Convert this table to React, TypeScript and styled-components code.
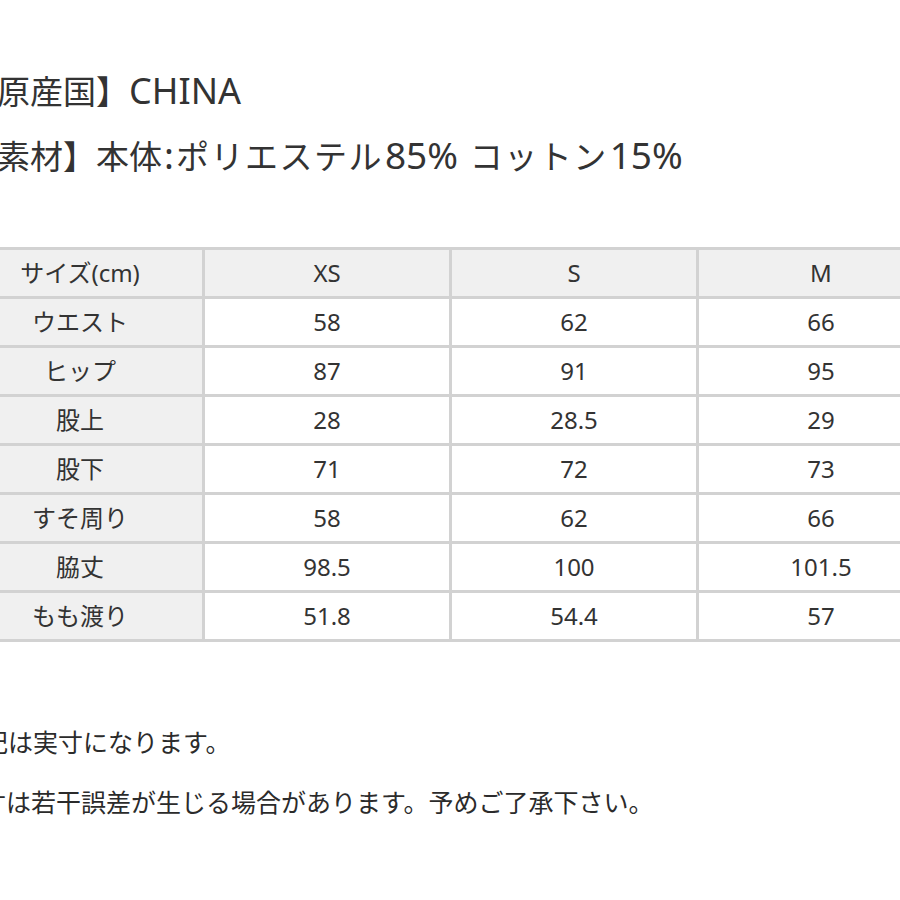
import React from "react";
import styled, { createGlobalStyle } from "styled-components";

const Global = createGlobalStyle`
  html, body {
    margin: 0;
    padding: 0;
    background: #ffffff;
    overflow: hidden;
  }
  body {
    font-family: "Noto Sans", "Noto Sans CJK JP", sans-serif;
    color: #333333;
  }
`;

const Page = styled.div`
  width: 900px;
  height: 900px;
  overflow: hidden;
  padding-top: 59px;
  box-sizing: border-box;
`;

const InfoLine = styled.div`
  font-size: 33px;
  line-height: 64px;
  height: 64px;
  margin-left: -36px;
  white-space: nowrap;
  color: #333333;
`;

const Latin = styled.span<{ $gap?: number; $size?: number }>`
  font-size: ${(p) => p.$size ?? 37}px;
  margin: 0 ${(p) => p.$gap ?? 0}px;
`;

const Kana = styled.span`
  letter-spacing: 1.5px;
`;

const Table = styled.table`
  margin-top: 60px;
  margin-left: -45px;
  width: 988px;
  table-layout: fixed;
  border-collapse: collapse;
  font-size: 24px;
  color: #333333;
`;

const Cell = styled.td<{ $shade?: boolean }>`
  width: 244px;
  height: 46px;
  padding: 0;
  text-align: center;
  vertical-align: middle;
  border: 3px solid #d2d2d2;
  background: ${(p) => (p.$shade ? "#f0f0f0" : "#ffffff")};
  line-height: 46px;
  white-space: nowrap;
`;

const Notes = styled.div`
  margin-top: 69px;
`;

const NoteLine = styled.div<{ $shift: number }>`
  font-family: "Noto Sans CJK JP", sans-serif;
  font-size: 25px;
  line-height: 60px;
  height: 60px;
  margin-left: ${(p) => p.$shift}px;
  white-space: nowrap;
  color: #2b2b2b;
`;

const header = ["サイズ(cm)", "XS", "S", "M"];
const rows: string[][] = [
  ["ウエスト", "58", "62", "66"],
  ["ヒップ", "87", "91", "95"],
  ["股上", "28", "28.5", "29"],
  ["股下", "71", "72", "73"],
  ["すそ周り", "58", "62", "66"],
  ["脇丈", "98.5", "100", "101.5"],
  ["もも渡り", "51.8", "54.4", "57"],
];

export default function App() {
  return (
    <>
      <Global />
      <Page>
        <InfoLine>
          【原産国】<Latin $size={36}>CHINA</Latin>
        </InfoLine>
        <InfoLine>
          【素材】本体<Latin $gap={2}>:</Latin>
          <Kana>ポリエステル</Kana>
          <Latin $gap={2}>85% </Latin>
          <Kana>コットン</Kana>
          <Latin $gap={2}>15%</Latin>
        </InfoLine>
        <Table>
          <tbody>
            <tr>
              {header.map((h) => (
                <Cell key={h} $shade>
                  {h}
                </Cell>
              ))}
            </tr>
            {rows.map((r) => (
              <tr key={r[0]}>
                {r.map((c, i) => (
                  <Cell key={i} $shade={i === 0}>
                    {c}
                  </Cell>
                ))}
              </tr>
            ))}
          </tbody>
        </Table>
        <Notes>
          <NoteLine $shift={-67}>※上記は実寸になります。</NoteLine>
          <NoteLine $shift={-69}>※実寸は若干誤差が生じる場合があります。予めご了承下さい。</NoteLine>
        </Notes>
      </Page>
    </>
  );
}
